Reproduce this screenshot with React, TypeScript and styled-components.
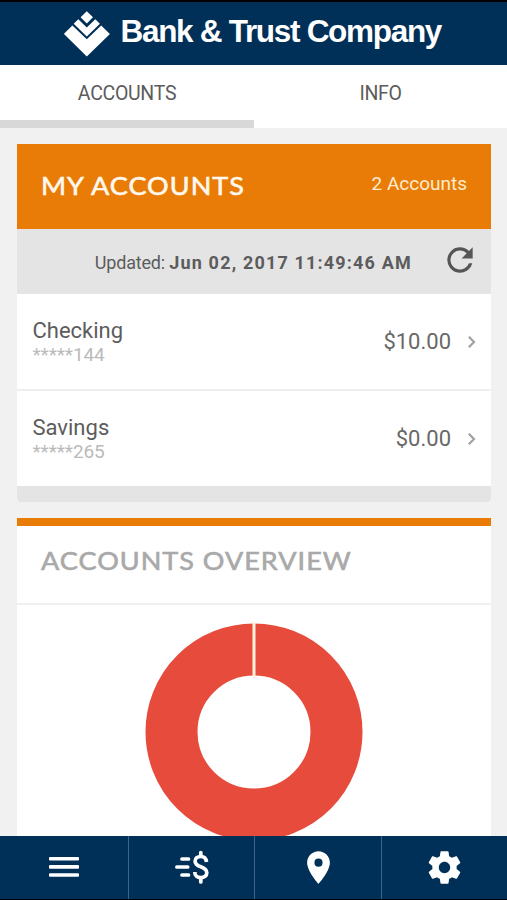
import React from "react";
import styled, { createGlobalStyle } from "styled-components";

const Global = createGlobalStyle`
  * { box-sizing: border-box; }
  html, body { margin: 0; background: #f1f1f1; overflow: hidden; }
  body { font-family: Roboto, sans-serif; color: #5c5c5c; }
  svg { display: block; flex: none; }
`;

const Screen = styled.div`
  width: 507px;
  height: 900px;
  display: flex;
  flex-direction: column;
  overflow: hidden;
  background: #f1f1f1;
  border-top: 2px solid #000;
  border-bottom: 1px solid #000;
`;

const Header = styled.header`
  flex: none;
  height: 63px;
  display: flex;
  align-items: center;
  gap: 10.5px;
  padding-left: 64px;
  background: #003057;
  color: #fff;
`;

const BrandName = styled.h1`
  margin: 0 0 5px;
  font: 700 31.5px/40px "Liberation Sans", Arial, sans-serif;
  letter-spacing: -1.3px;
  white-space: nowrap;
`;

const Tabs = styled.nav`
  flex: none;
  height: 63px;
  display: grid;
  grid-template-columns: 254px 1fr;
  background: #fff;
`;

const Tab = styled.div<{ $active?: boolean }>`
  display: flex;
  justify-content: center;
  padding-top: 17px;
  font-size: 19.5px;
  line-height: 23px;
  letter-spacing: -0.3px;
  border-bottom: 8px solid ${(p) => (p.$active ? "#d8d8d8" : "#fff")};
`;

const Content = styled.main`
  flex: 1;
  min-height: 0;
  overflow: hidden;
  display: flex;
  flex-direction: column;
  gap: 16px;
  padding: 16px 16px 0 17px;
`;

const Card = styled.section<{ $grow?: boolean }>`
  flex: ${(p) => (p.$grow ? "1" : "none")};
  min-height: 0;
  overflow: hidden;
  background: #fff;
  border-radius: ${(p) => (p.$grow ? "0" : "0 0 4px 4px")};
  border-top: ${(p) => (p.$grow ? "8px solid #e97c06" : "0")};
`;

const CardTitle = styled.h2`
  margin: 0;
  font: 400 25px/30px Lato, sans-serif;
  letter-spacing: 0.95px;
  white-space: nowrap;
  transform: scaleX(1.08);
  transform-origin: left;
  -webkit-text-stroke: 0.6px currentColor;
`;

const CardHeader = styled.div`
  height: 85px;
  display: flex;
  justify-content: space-between;
  padding: 26px 24px 0;
  background: #e97c06;
  color: #fff8ec;
`;

const Count = styled.span`
  font-size: 19px;
  line-height: 27px;
  color: #ffeccf;
`;

const Updated = styled.div`
  height: 65px;
  display: flex;
  align-items: center;
  justify-content: flex-end;
  padding: 2px 12px 0 0;
  background: #e4e4e4;
  font-size: 18px;
  letter-spacing: -0.2px;
  white-space: pre;

  b { letter-spacing: 1.18px; }
  svg { margin: 0 0 5px 29px; }
`;

const Row = styled.div`
  height: 95px;
  display: flex;
  align-items: center;
  padding: 0 15px 0 15.5px;
  & + & { height: 97px; border-top: 2px solid #eee; }
`;

const Names = styled.div`
  flex: 1;
  display: flex;
  flex-direction: column;
  padding-top: 1px;
`;

const Name = styled.span`
  font-size: 22px;
  line-height: 25px;
`;

const Mask = styled.span`
  font-size: 19px;
  line-height: 24px;
  letter-spacing: -0.1px;
  color: #bababa;
`;

const Amount = styled.span`
  font-size: 22px;
  color: #686868;
  margin-right: 16px;
`;

const CardFoot = styled.div`
  height: 16px;
  background: #e4e4e4;
`;

const OverviewHeader = styled.div`
  height: 79px;
  padding: 19px 24px 0;
  color: #a9a9a9;
  border-bottom: 2px solid #f0f0f0;
`;

const ChartArea = styled.div`
  display: flex;
  justify-content: center;
  padding-top: 17px;
`;

const BottomBar = styled.nav`
  flex: none;
  height: 63px;
  display: grid;
  grid-template-columns: 129px 126px 127px 1fr;
  background: #003057;
  color: #fff;
`;

const BarItem = styled.div`
  display: flex;
  align-items: center;
  justify-content: center;
  padding-bottom: 1px;
  border-right: 1px solid #406383;
  &:last-child { border-right: 0; }
`;

const Logo = () => (
  <svg width="46" height="46" viewBox="0 0 46 46" fill="#fff">
    <path d="M22.8 0.3l6.2 6-6.2 6.2-6.2-6.2z" />
    <path d="M14.3 8.2l8.5 8.2 8.5-8.2 4.6 4.5-13.1 12.9L9.7 12.7z" />
    <path d="M8.4 14.4l14.4 13.9 14.4-13.9 8.7 8.5-23.1 22.6L-.1 22.9z" />
  </svg>
);

const RefreshIcon = () => (
  <svg width="38" height="38" viewBox="0 0 24 24" fill="#555">
    <path d="M17.65 6.35A7.96 7.96 0 0 0 12 4a8 8 0 1 0 7.73 10h-2.08A6 6 0 1 1 12 6c1.66 0 3.14.69 4.22 1.78L13 11h7V4z" />
  </svg>
);

const Chevron = () => (
  <svg width="9" height="14" viewBox="0 0 9 14" fill="none" stroke="#a0a0a0" strokeWidth="2.2">
    <path d="M1.8 1.8L7 7l-5.2 5.2" />
  </svg>
);

const Donut = () => (
  <svg width="220" height="220" viewBox="0 0 220 220">
    <circle cx="110" cy="110" r="82.5" fill="none" stroke="#e64b3c" strokeWidth="52" />
    <path d="M110 0v56" stroke="#fff3dc" strokeWidth="3" />
  </svg>
);

const MenuIcon = () => (
  <svg width="30" height="20" viewBox="0 0 30 20" fill="#fff">
    <rect y="0" width="30" height="3.6" rx="1" />
    <rect y="8.1" width="30" height="3.6" rx="1" />
    <rect y="16.2" width="30" height="3.6" rx="1" />
  </svg>
);

const PayIcon = () => (
  <svg width="34" height="34" viewBox="0 0 34 34" fill="none" stroke="#fff" strokeWidth="3.7" strokeLinecap="round">
    <path d="M7 9h6.5M1.9 17h10.8M7 25h6.5" />
    <path d="M31.5 12c-.3-3.6-2.5-5.5-5.7-5.5-3.4 0-5.7 1.9-5.7 4.7 0 3.2 2.5 4.4 5.7 5.6s6 2.6 6 6c0 3-2.5 4.9-6 4.9-3.6 0-6-2.2-6-5.7" strokeLinecap="butt" />
    <path d="M25.8 2.5v3M25.8 29v3" />
  </svg>
);

const PinIcon = () => (
  <svg width="39" height="39" viewBox="0 0 24 24" fill="#fff">
    <path d="M12 2C8.13 2 5 5.13 5 9c0 5.25 7 13 7 13s7-7.75 7-13c0-3.87-3.13-7-7-7zm0 9.5a2.5 2.5 0 0 1 0-5 2.5 2.5 0 0 1 0 5z" />
  </svg>
);

const GearIcon = () => (
  <svg width="39" height="39" viewBox="0 0 24 24" fill="#fff">
    <path d="M19.43 12.98c.04-.32.07-.64.07-.98s-.03-.66-.07-.98l2.11-1.65c.19-.15.24-.42.12-.64l-2-3.46c-.12-.22-.39-.3-.61-.22l-2.49 1c-.52-.4-1.08-.73-1.69-.98l-.38-2.65A.488.488 0 0 0 14 2h-4c-.25 0-.46.18-.49.42l-.38 2.65c-.61.25-1.17.59-1.69.98l-2.49-1c-.23-.09-.49 0-.61.22l-2 3.46c-.13.22-.07.49.12.64l2.11 1.65c-.04.32-.07.65-.07.98s.03.66.07.98l-2.11 1.65c-.19.15-.24.42-.12.64l2 3.46c.12.22.39.3.61.22l2.49-1c.52.4 1.08.73 1.69.98l.38 2.65c.03.24.24.42.49.42h4c.25 0 .46-.18.49-.42l.38-2.65c.61-.25 1.17-.59 1.69-.98l2.49 1c.23.09.49 0 .61-.22l2-3.46c.12-.22.07-.49-.12-.64l-2.11-1.65zM12 15.5c-1.93 0-3.5-1.57-3.5-3.5s1.57-3.5 3.5-3.5 3.5 1.57 3.5 3.5-1.57 3.5-3.5 3.5z" />
  </svg>
);

const accounts = [
  { name: "Checking", mask: "*****144", amount: "$10.00" },
  { name: "Savings", mask: "*****265", amount: "$0.00" },
];

export default function App() {
  return (
    <>
      <Global />
      <Screen>
        <Header>
          <Logo />
          <BrandName>Bank &amp; Trust Company</BrandName>
        </Header>
        <Tabs>
          <Tab $active>ACCOUNTS</Tab>
          <Tab>INFO</Tab>
        </Tabs>
        <Content>
          <Card>
            <CardHeader>
              <CardTitle>MY ACCOUNTS</CardTitle>
              <Count>2 Accounts</Count>
            </CardHeader>
            <Updated>
              <span>Updated: </span>
              <b>Jun 02, 2017 11:49:46 AM</b>
              <RefreshIcon />
            </Updated>
            {accounts.map((a) => (
              <Row key={a.name}>
                <Names>
                  <Name>{a.name}</Name>
                  <Mask>{a.mask}</Mask>
                </Names>
                <Amount>{a.amount}</Amount>
                <Chevron />
              </Row>
            ))}
            <CardFoot />
          </Card>
          <Card $grow>
            <OverviewHeader>
              <CardTitle>ACCOUNTS OVERVIEW</CardTitle>
            </OverviewHeader>
            <ChartArea>
              <Donut />
            </ChartArea>
          </Card>
        </Content>
        <BottomBar>
          <BarItem><MenuIcon /></BarItem>
          <BarItem><PayIcon /></BarItem>
          <BarItem><PinIcon /></BarItem>
          <BarItem><GearIcon /></BarItem>
        </BottomBar>
      </Screen>
    </>
  );
}
